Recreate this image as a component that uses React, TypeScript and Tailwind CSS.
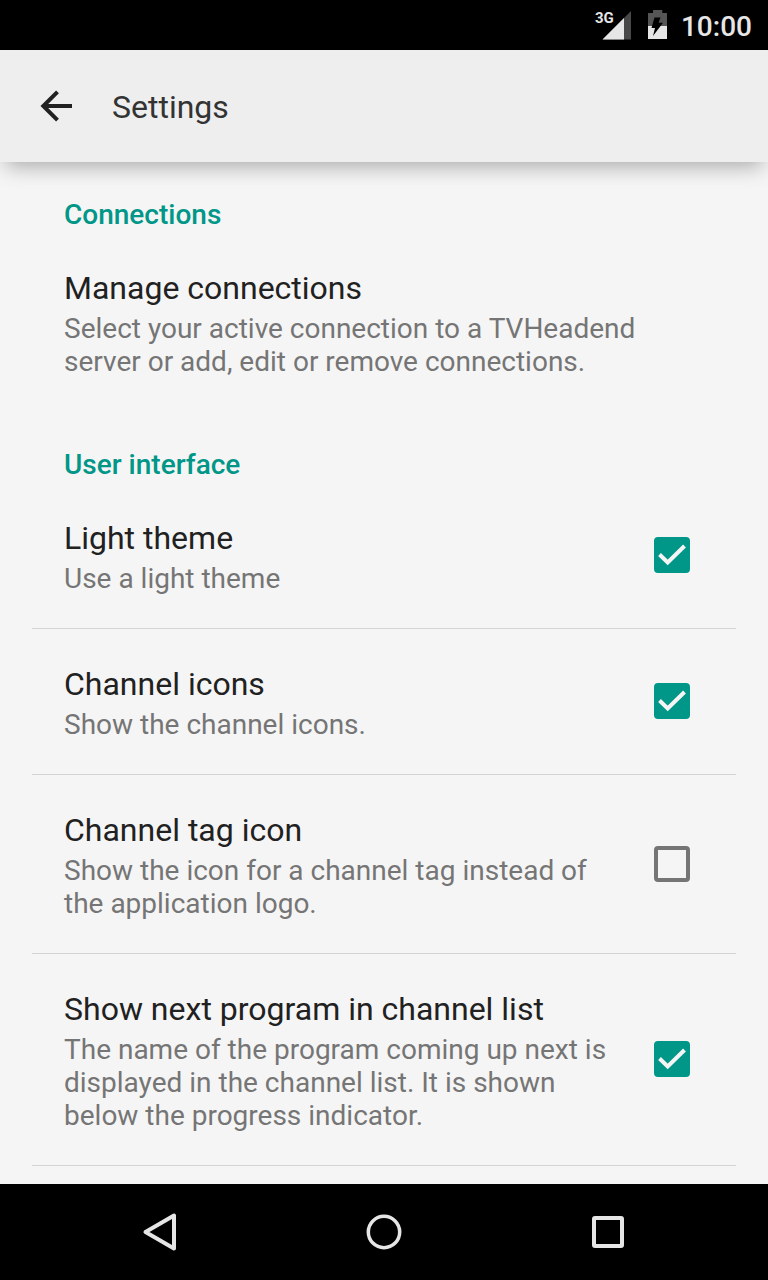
import { useState } from "react";

type Preference = {
  id: string;
  title: string;
  summary: string;
  checked?: boolean;
};

const connectionPreferences: Preference[] = [
  {
    id: "manage-connections",
    title: "Manage connections",
    summary:
      "Select your active connection to a TVHeadend server or add, edit or remove connections.",
  },
];

const interfacePreferences: Preference[] = [
  { id: "light-theme", title: "Light theme", summary: "Use a light theme", checked: true },
  { id: "channel-icons", title: "Channel icons", summary: "Show the channel icons.", checked: true },
  {
    id: "channel-tag-icon",
    title: "Channel tag icon",
    summary: "Show the icon for a channel tag instead of the application logo.",
    checked: false,
  },
  {
    id: "next-program",
    title: "Show next program in channel list",
    summary:
      "The name of the program coming up next is displayed in the channel list. It is shown below the progress indicator.",
    checked: true,
  },
];

function StatusBar() {
  return (
    <div className="flex h-[50px] shrink-0 items-center justify-end bg-black pr-4 text-[#e6e6e6]">
      <div className="relative mr-[17px]">
        <svg className="block" width="36" height="30" viewBox="0 0 36 30" aria-hidden="true">
          <path d="M36 1V29.500H7.500Z" fill="#484848" />
          <path d="M29 8V29.500H7.500Z" fill="#e6e6e6" />
        </svg>
        <span className="absolute top-0 left-0 text-[15px] leading-4 font-bold">3G</span>
      </div>
      <svg className="mr-[14px] block" width="19" height="30" viewBox="0 0 19 30" aria-hidden="true">
        <path d="M5 0H14.300V3H19V29H0V3H5Z" fill="#555" />
        <path d="M0 16H19V29H0Z" fill="#e6e6e6" />
        <path d="M6.500 7.500H12.500L10.500 12.700H15L5 26L7 18H3.500Z" fill="#000" />
      </svg>
      <time className="pt-1 text-[28px] leading-8 font-medium">10:00</time>
    </div>
  );
}

function Row({ title, summary }: Preference) {
  return (
    <span className="block min-w-0 flex-1">
      <span className="block text-[32px] leading-[38px] text-[#212121]">{title}</span>
      <span className="mt-[5px] block text-[28px] leading-[33px] text-[#757575]">{summary}</span>
    </span>
  );
}

function CheckRow(props: Preference) {
  const [checked, setChecked] = useState(Boolean(props.checked));
  return (
    <li className="border-b border-[#d4d4d4]">
      <label className="flex items-center px-8">
        <span className="flex min-w-0 flex-1 pt-9 pr-4 pb-[33px]">
          <Row {...props} />
        </span>
        <span className="mb-px grid w-16 shrink-0 place-items-center">
          <input
            id={props.id}
            type="checkbox"
            checked={checked}
            onChange={(e) => setChecked(e.target.checked)}
            className="col-start-1 row-start-1 size-9 appearance-none rounded-[4px] border-4 border-[#757575] checked:border-[#009688] checked:bg-[#009688]"
          />
          {checked && (
            <svg
              className="pointer-events-none col-start-1 row-start-1"
              width="36"
              height="36"
              viewBox="0 0 36 36"
              fill="none"
              aria-hidden="true"
            >
              <path d="M5.500 17.500L13.700 25.500L30.500 9" stroke="#f5f5f5" strokeWidth="4" />
            </svg>
          )}
        </span>
      </label>
    </li>
  );
}

function SectionTitle({ children }: { children: string }) {
  return (
    <h2 className="px-8 pt-9 pb-[2px] text-[28px] leading-[33px] font-medium text-[#009688]">
      {children}
    </h2>
  );
}

function NavigationBar() {
  return (
    <nav className="flex h-24 shrink-0 items-center justify-center bg-black px-12 text-[#e6e6e6]">
      <button type="button" aria-label="Back" className="flex h-full w-56 items-center justify-center">
        <svg width="40" height="40" viewBox="0 0 40 40" fill="none" stroke="currentColor" strokeWidth="4" strokeLinejoin="round" aria-hidden="true">
          <path d="M34 3.500V36.500L5.500 20Z" />
        </svg>
      </button>
      <button type="button" aria-label="Home" className="flex h-full w-56 items-center justify-center">
        <svg width="40" height="40" viewBox="0 0 40 40" fill="none" stroke="currentColor" strokeWidth="3.500" aria-hidden="true">
          <circle cx="20" cy="20" r="15.700" />
        </svg>
      </button>
      <button type="button" aria-label="Recent apps" className="flex h-full w-56 items-center justify-center">
        <svg width="40" height="40" viewBox="0 0 40 40" fill="none" stroke="currentColor" strokeWidth="4" aria-hidden="true">
          <rect x="6" y="6" width="28" height="28" rx="1" />
        </svg>
      </button>
    </nav>
  );
}

export default function App() {
  return (
    <div className="flex h-screen flex-col bg-[#f5f5f5] font-['Roboto',sans-serif]">
      <StatusBar />
      <header className="relative z-10 flex h-28 shrink-0 items-center bg-[#eeeeee] px-8 shadow-[0_10px_20px_-6px_rgba(0,0,0,0.32)]">
        <button type="button" aria-label="Navigate up" className="mr-8 flex size-12 items-center justify-center">
          <svg width="48" height="48" viewBox="0 0 48 48" fill="none" stroke="#212121" strokeWidth="4" aria-hidden="true">
            <path d="M40 24H11M25.500 9.800L11.300 24L25.500 38.200" />
          </svg>
        </button>
        <h1 className="pt-[2px] text-[32px] leading-[38px] text-[#333333]">Settings</h1>
      </header>
      <main className="min-h-0 flex-1 overflow-y-auto px-8">
        <section>
          <SectionTitle>Connections</SectionTitle>
          <ul>
            {connectionPreferences.map((item) => (
              <li key={item.id} className="border-b border-transparent">
                <button type="button" className="flex w-full px-8 pt-9 pb-[33px] text-left">
                  <Row {...item} />
                </button>
              </li>
            ))}
          </ul>
        </section>
        <section>
          <SectionTitle>User interface</SectionTitle>
          <ul>
            {interfacePreferences.map((item) => (
              <CheckRow key={item.id} {...item} />
            ))}
          </ul>
        </section>
      </main>
      <NavigationBar />
    </div>
  );
}
